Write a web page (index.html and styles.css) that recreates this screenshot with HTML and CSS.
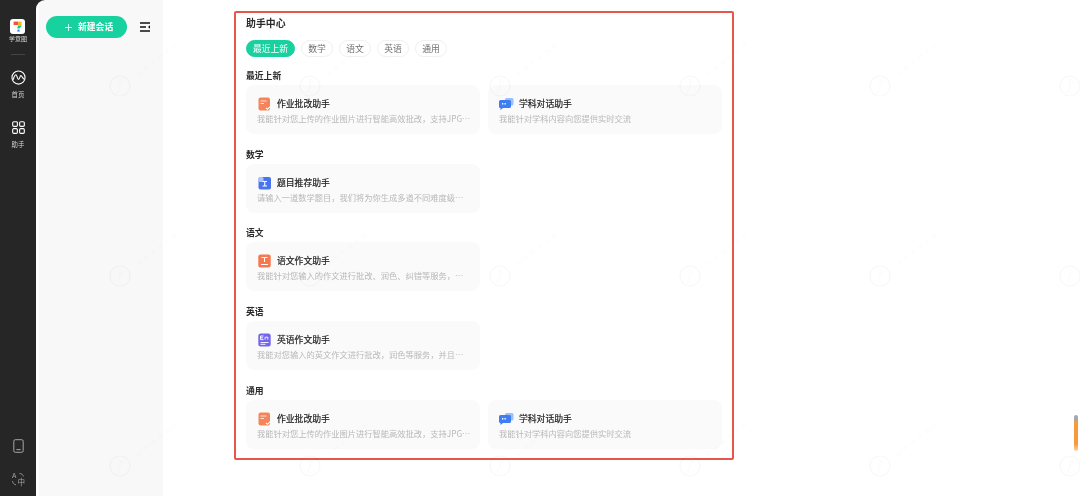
FILE: index.html
```html
<!DOCTYPE html>
<html lang="zh-CN">
<head>
<meta charset="utf-8">
<title>助手中心</title>
<link rel="stylesheet" href="styles.css">
</head>
<body>
<div class="app">
  <nav class="rail">
    <div class="brand">
      <svg class="logo" viewBox="0 0 15 15"><rect width="15" height="15" rx="3" fill="#fff"/><path d="M3.600 2.600h4.400v3.400H3.600z" fill="#f0523d"/><path d="M8 2.600h3.600v4.400H8z" fill="#f5b81f"/><path d="M8 7h3.600L9.600 9.600H7.400V8z" fill="#1fc58f"/><rect x="7.400" y="10.600" width="2.200" height="2" fill="#3e7bf0"/></svg>
      <span class="brand-name">学意图</span>
    </div>
    <div class="rail-line"></div>
    <a class="rail-item rail-home">
      <svg class="rail-icon" viewBox="0 0 16 16" fill="none" stroke="#fff" stroke-width="1.200"><circle cx="8" cy="8" r="7"/><path d="M2.400 10c1-3.400 2-5 3-5s1.300 5 2.600 5 1.500-4 2.500-4 1.500 2 3 3.500" stroke-linecap="round"/></svg>
      <span>首页</span>
    </a>
    <a class="rail-item rail-help">
      <svg class="rail-icon" viewBox="0 0 16 16" fill="none" stroke="#fff" stroke-width="1.200"><rect x="1.800" y="1.800" width="5" height="5" rx="1.200"/><rect x="9.200" y="1.800" width="5" height="5" rx="1.200"/><rect x="1.800" y="9.200" width="5" height="5" rx="1.200"/><rect x="9.200" y="9.200" width="5" height="5" rx="1.200"/></svg>
      <span>助手</span>
    </a>
    <div class="rail-bottom">
      <svg class="phone" viewBox="0 0 11 14" fill="none" stroke="#a6a6a6" stroke-width="1"><rect x="0.800" y="0.700" width="9.400" height="12.600" rx="1.500"/><path d="M3.800 10.600h3.400" stroke-linecap="round"/></svg>
      <div class="lang">
        <span class="lang-a">A</span><span class="lang-z">中</span>
        <svg class="lang-arcs" viewBox="0 0 14 14" fill="none" stroke="#a6a6a6" stroke-width="0.800"><path d="M8.500 1.500c2 0 3.500 1 3.800 3"/><path d="M1.500 9c.2 2 1.500 3.500 3.500 3.800"/></svg>
      </div>
    </div>
  </nav>

  <aside class="panel">
    <button class="new-chat"><svg class="plus" viewBox="0 0 7 7" fill="none" stroke="#fff" stroke-width="0.800"><path d="M3.500 0v7M0 3.500h7"/></svg><span>新建会话</span></button>
    <svg class="fold" viewBox="0 0 10 10" fill="none" stroke="#111" stroke-width="1.300"><path d="M0 1h10M0 5h6M0 9h10"/><path d="M10 3.200 8 5l2 1.800z" fill="#111" stroke="none"/></svg>
  </aside>

  <main class="main">
    <section class="center">
      <h1 class="title">助手中心</h1>
      <div class="tabs">
        <span class="tab tab-on">最近上新</span>
        <span class="tab">数学</span>
        <span class="tab">语文</span>
        <span class="tab">英语</span>
        <span class="tab">通用</span>
      </div>

      <div class="group">
        <h2 class="group-name">最近上新</h2>
        <div class="cards">
          <article class="card">
            <div class="card-head"><svg class="ico" viewBox="0 0 14 14"><rect x="1" y="0.500" width="11.500" height="13" rx="2" fill="#f6845a"/><path d="M3 4h6M3 6.500h3.500" stroke="#ffe3d6" stroke-width="1"/><path d="M8.500 11l1.500 1.300 3-3" fill="none" stroke="#fff" stroke-width="1.200"/></svg><span>作业批改助手</span></div>
            <p>我能针对您上传的作业图片进行智能高效批改，支持JPG、PNG等多种格式文件</p>
          </article>
          <article class="card">
            <div class="card-head"><svg class="ico" viewBox="0 0 15 14"><rect x="6" y="1" width="8.500" height="7.500" rx="1.500" fill="#9cc0fb"/><path d="M1.500 3h9A1.500 1.500 0 0 1 12 4.500v5A1.500 1.500 0 0 1 10.500 11H4l-2.500 2V11A1.500 1.500 0 0 1 0 9.500v-5A1.500 1.500 0 0 1 1.500 3z" fill="#3f7df2"/><path d="M3 6h1.300v1.500H3zM5.500 6h1.300v1.500H5.500z" fill="#fff"/></svg><span>学科对话助手</span></div>
            <p>我能针对学科内容向您提供实时交流</p>
          </article>
        </div>
      </div>

      <div class="group">
        <h2 class="group-name">数学</h2>
        <div class="cards">
          <article class="card">
            <div class="card-head"><svg class="ico" viewBox="0 0 14 14"><rect x="1" y="1" width="12.500" height="12.500" rx="2" fill="#4a73ee"/><rect x="1" y="1" width="5" height="5" rx="1.500" fill="#a9c3fa"/><path d="M5 5.500h4.500M7.250 5.500v4.500M5 10h4.500" stroke="#fff" stroke-width="1.100" fill="none"/></svg><span>题目推荐助手</span></div>
            <p>请输入一道数学题目，我们将为你生成多道不同难度级别的相似题目进行练习</p>
          </article>
        </div>
      </div>

      <div class="group">
        <h2 class="group-name">语文</h2>
        <div class="cards">
          <article class="card">
            <div class="card-head"><svg class="ico" viewBox="0 0 14 14"><rect x="0.800" y="0.500" width="12.400" height="13" rx="2" fill="#f7774f"/><path d="M4 3.500h6M7 3.500v4.500M3.500 10.500h7" stroke="#fff" stroke-width="1.100" fill="none"/></svg><span>语文作文助手</span></div>
            <p>我能针对您输入的作文进行批改、润色、纠错等服务，并且给出详细的修改建议</p>
          </article>
        </div>
      </div>

      <div class="group">
        <h2 class="group-name">英语</h2>
        <div class="cards">
          <article class="card">
            <div class="card-head"><svg class="ico" viewBox="0 0 14 14"><rect x="0.800" y="0.500" width="12.400" height="13" rx="2.500" fill="#7465ee"/><path d="M3 3h3M3 3v3.600h3M3 4.800h2.600M7.600 6.600V4.200h2.700v2.400M3 9.500h8M3 11.300h5" stroke="#fff" stroke-width="0.900" fill="none"/></svg><span>英语作文助手</span></div>
            <p>我能对您输入的英文作文进行批改，润色等服务，并且给出详细的修改建议和范文</p>
          </article>
        </div>
      </div>

      <div class="group">
        <h2 class="group-name">通用</h2>
        <div class="cards">
          <article class="card">
            <div class="card-head"><svg class="ico" viewBox="0 0 14 14"><rect x="1" y="0.500" width="11.500" height="13" rx="2" fill="#f6845a"/><path d="M3 4h6M3 6.500h3.500" stroke="#ffe3d6" stroke-width="1"/><path d="M8.500 11l1.500 1.300 3-3" fill="none" stroke="#fff" stroke-width="1.200"/></svg><span>作业批改助手</span></div>
            <p>我能针对您上传的作业图片进行智能高效批改，支持JPG、PNG等多种格式文件</p>
          </article>
          <article class="card">
            <div class="card-head"><svg class="ico" viewBox="0 0 15 14"><rect x="6" y="1" width="8.500" height="7.500" rx="1.500" fill="#9cc0fb"/><path d="M1.500 3h9A1.500 1.500 0 0 1 12 4.500v5A1.500 1.500 0 0 1 10.500 11H4l-2.500 2V11A1.500 1.500 0 0 1 0 9.500v-5A1.500 1.500 0 0 1 1.500 3z" fill="#3f7df2"/><path d="M3 6h1.300v1.500H3zM5.500 6h1.300v1.500H5.500z" fill="#fff"/></svg><span>学科对话助手</span></div>
            <p>我能针对学科内容向您提供实时交流</p>
          </article>
        </div>
      </div>
    </section>
  </main>

  <div class="scroll-mark"></div>
  <svg class="watermark" width="1080" height="496" aria-hidden="true">
    <defs>
      <pattern id="wm" x="50" y="0" width="190" height="190" patternUnits="userSpaceOnUse">
        <circle cx="70" cy="86" r="10" fill="none" stroke="#f8f8f8" stroke-width="1.200"/>
        <path d="M70 79v8l-3 6M70 82h4" fill="none" stroke="#fafafa" stroke-width="1"/>
        <path d="M87 75l40-32" fill="none" stroke="#fdfdfd" stroke-width="3" stroke-dasharray="5 4"/>
      </pattern>
    </defs>
    <rect class="watermark-fill" width="1080" height="496" fill="url(#wm)"/>
  </svg>
</div>
</body>
</html>
```

FILE: styles.css
```css
* { box-sizing: border-box; }
html, body { margin: 0; height: 100%; }
body {
  background: #fff;
  font-family: "Noto Sans CJK SC", "Noto Sans", sans-serif;
  color: #222;
  overflow: hidden;
}
.app { position: relative; display: flex; width: 1080px; height: 496px; background: #262626; }

.rail {
  width: 36px;
  flex: none;
  display: flex;
  flex-direction: column;
  align-items: center;
  padding-top: 19px;
  color: #cfcfcf;
}
.brand { display: flex; flex-direction: column; align-items: center; }
.logo { width: 15px; height: 15px; display: block; }
.brand-name { font-size: 6px; line-height: 8px; margin-top: 1px; color: #d8d8d8; }
.rail-line { width: 14px; height: 1px; background: #444; margin-top: 11px; }
.rail-item { display: flex; flex-direction: column; align-items: center; font-size: 6.400px; line-height: 9px; color: #d4d4d4; }
.rail-item span { margin-top: 5px; }
.rail-home { margin-top: 15px; }
.rail-help { margin-top: 21px; }
.rail-icon { width: 15px; height: 15px; display: block; }
.rail-bottom { margin-top: auto; display: flex; flex-direction: column; align-items: center; gap: 19px; padding-bottom: 10px; }
.phone { width: 11px; height: 14px; display: block; }
.lang { width: 14px; height: 14px; position: relative; color: #a6a6a6; }
.lang-a { position: absolute; left: 1px; top: 0; font-family: "Liberation Sans", sans-serif; font-size: 6.500px; line-height: 7px; }
.lang-z { position: absolute; right: 0; bottom: 0; font-size: 7.500px; line-height: 8px; }
.lang-arcs { position: absolute; inset: 0; width: 14px; height: 14px; }

.panel {
  width: 127px;
  flex: none;
  display: flex;
  align-items: flex-start;
  gap: 13px;
  padding: 16px 0 0 10px;
  background: linear-gradient(90deg, #fff 0, #fff 3px, #f8f8f8 3px);
  border-top-left-radius: 9px;
}
.new-chat {
  width: 81px;
  height: 22px;
  border: 0;
  border-radius: 11px;
  background: #17d19f;
  color: #fff;
  font: 700 8.800px/22px "Noto Sans CJK SC", "Noto Sans", sans-serif;
  display: flex;
  align-items: center;
  gap: 6px;
  padding: 0 0 0 19px;
}
.plus { width: 7px; height: 7px; display: block; flex: none; }
.fold { width: 10px; height: 10px; margin-top: 6px; display: block; }

.main { flex: 1; background: #fff; padding: 11px 0 0 71px; }
.center {
  width: 500px;
  height: 449px;
  border: 2px solid #e5574d;
  border-radius: 2px;
  padding: 3px 10px 0;
}
.title { margin: 0; font-size: 9.900px; line-height: 14px; font-weight: 700; color: #2a2a2a; }
.tabs { display: flex; gap: 6px; margin-top: 10px; }
.tab {
  height: 17px;
  width: 32px;
  border: 1px solid #f0f0f0;
  border-radius: 9px;
  font-size: 8.800px;
  line-height: 15px;
  text-align: center;
  color: #6e6e6e;
  background: #fff;
}
.tab-on { width: 49px; background: #17d19f; border-color: #17d19f; color: #fff; }

.group { margin-top: 14.700px; }
.tabs + .group { margin-top: 13px; }
.group-name { margin: 0 0 3px; font-size: 8.800px; line-height: 12px; font-weight: 700; color: #2a2a2a; }
.cards { display: grid; grid-template-columns: 234px 234px; gap: 8px; }
.card {
  height: 49px;
  background: #fafafa;
  border-radius: 8px;
  padding: 12px 9px 0 11px;
  min-width: 0;
}
.card-head { display: flex; align-items: center; gap: 5px; height: 14px; font-size: 8.800px; line-height: 14px; font-weight: 400; color: #222; -webkit-text-stroke: 0.2px #222; }
.ico { width: 15px; height: 14px; display: block; flex: none; }
.card p {
  margin: 1px 0 0;
  font-size: 8.250px;
  line-height: 12px;
  color: #b8b8b8;
  white-space: nowrap;
  overflow: hidden;
  text-overflow: ellipsis;
}

.scroll-mark {
  position: absolute;
  left: 1074px;
  top: 415px;
  width: 4px;
  height: 36px;
  border-radius: 2px;
  background: linear-gradient(180deg, #a8a8a8 0, #a8a8a8 5px, #f79a3e 7px, #f79a3e 80%, #fbd3a5 100%);
}
.watermark { position: absolute; left: 0; top: 0; pointer-events: none; }
.watermark-fill { mix-blend-mode: multiply; }
```
